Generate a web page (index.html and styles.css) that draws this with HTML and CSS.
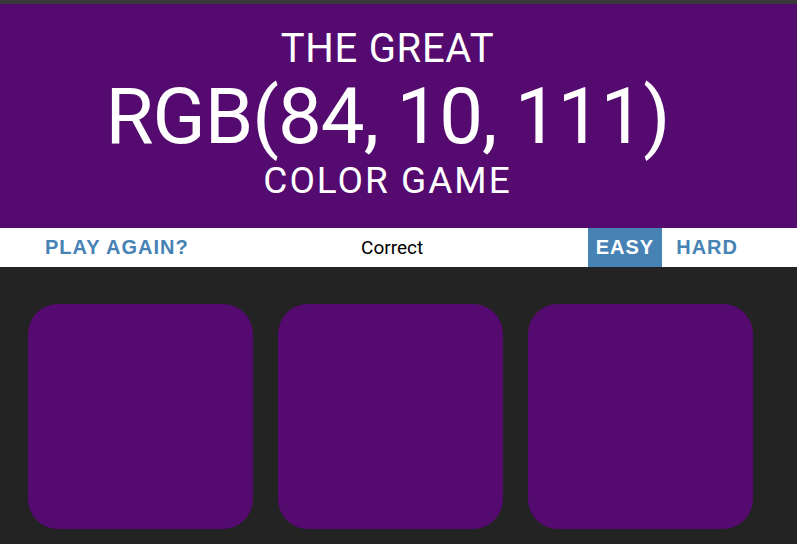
FILE: index.html
```html
<!DOCTYPE html>
<html>
<head>
<meta charset="utf-8">
<title>Color Game</title>
<link rel="stylesheet" href="styles.css">
</head>
<body>
<div class="topline"></div>
<h1 class="header">
  <span class="small-line">THE GREAT</span>
  <span class="rgb-line">RGB(84, 10, 111)</span>
  <span class="small-line bottom-line">COLOR GAME</span>
</h1>
<div class="stripe">
  <button class="btn reset">Play Again?</button>
  <span class="message">Correct</span>
  <button class="btn mode selected">Easy</button>
  <button class="btn mode hard">Hard</button>
</div>
<div class="board">
  <div class="square"></div>
  <div class="square"></div>
  <div class="square"></div>
</div>
</body>
</html>
```
FILE: styles.css
```css
html, body {
  margin: 0;
  padding: 0;
}
body {
  background: #232323;
  font-family: Roboto, "Liberation Sans", sans-serif;
  height: 544px;
  overflow: hidden;
}
.topline {
  height: 4px;
  background: #39393c;
}
.header {
  margin: 0;
  background: #540a6f;
  color: #ffffff;
  font-weight: 400;
  text-align: center;
  padding: 25px 22px 0 0;
  height: 224px;
  box-sizing: border-box;
}
.small-line {
  display: block;
  font-size: 40px;
  line-height: 40px;
  letter-spacing: 0.7px;
}
.rgb-line {
  display: block;
  font-size: 78px;
  line-height: 78px;
  letter-spacing: -1px;
  margin-top: 9px;
}
.bottom-line {
  font-size: 37px;
  line-height: 37px;
  letter-spacing: 2px;
  margin-top: 6px;
}
.stripe {
  display: flex;
  align-items: stretch;
  height: 39px;
  background: #ffffff;
  padding: 0 51px 0 37px;
}
.btn {
  border: none;
  background: none;
  text-transform: uppercase;
  font-family: "Liberation Sans", Arial, sans-serif;
  font-weight: 700;
  font-size: 20px;
  letter-spacing: 1px;
  color: #4682b4;
  padding: 0 8px;
  margin: 0;
  height: 100%;
}
.hard {
  margin-left: 6px;
}
.message {
  flex: 1;
  display: flex;
  align-items: center;
  justify-content: center;
  font-size: 19px;
  color: #000000;
}
.selected {
  background: #4682b4;
  color: #ffffff;
}
.board {
  display: flex;
  gap: 25px;
  padding: 37px 0 0 28px;
}
.square {
  width: 225px;
  height: 225px;
  border-radius: 30px;
  background: #540a6f;
}
```
